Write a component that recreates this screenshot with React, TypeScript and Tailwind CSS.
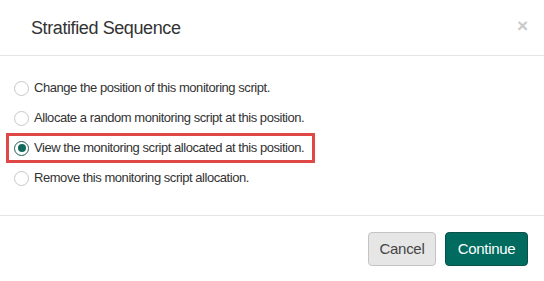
import { useState } from "react";

const OPTIONS = [
  "Change the position of this monitoring script.",
  "Allocate a random monitoring script at this position.",
  "View the monitoring script allocated at this position.",
  "Remove this monitoring script allocation.",
];

const Radio = ({ checked }: { checked: boolean }) => (
  <span
    className={`flex h-[15px] w-[15px] shrink-0 items-center justify-center rounded-full border ${
      checked ? "border-[#1f5c55] border-[1.5px]" : "border-[#c8c8c8]"
    } bg-white`}
  >
    {checked && <span className="h-[8px] w-[8px] rounded-full bg-[#12695e]" />}
  </span>
);

export default function App() {
  const [selected, setSelected] = useState(2);

  return (
    <div
      className="h-[281px] w-[544px] bg-white text-[#333]"
      style={{ fontFamily: '"Liberation Sans", Arial, sans-serif' }}
    >
      {/* header */}
      <div className="flex h-[56px] items-center justify-between border-b border-[#e5e5e5] pl-[31px] pr-[16px]">
        <h4 className="text-[18px] leading-none tracking-[-0.4px] text-[#333]">Stratified Sequence</h4>
        <button type="button" className="pb-[4px] text-[19px] font-bold leading-none text-[#cacaca]">
          ×
        </button>
      </div>

      {/* body */}
      <div className="flex flex-col items-start pb-[22px] pl-[6px] pt-[17px]">
        {OPTIONS.map((label, i) => (
          <label
            key={i}
            onClick={() => setSelected(i)}
            className={`flex h-[30px] cursor-pointer items-center gap-[5px] border-[3px] pl-[5px] pr-[8px] text-[13px] tracking-[-0.45px] ${
              i === selected ? "border-[#e04848]" : "border-transparent"
            }`}
          >
            <Radio checked={i === selected} />
            <span>{label}</span>
          </label>
        ))}
      </div>

      {/* footer */}
      <div className="flex justify-end gap-[9px] border-t border-[#e5e5e5] px-[16px] pt-[16px]">
        <button
          type="button"
          className="h-[34px] w-[68px] rounded-[4px] border border-[#c4c4c4] bg-[#e6e6e6] text-[15px] tracking-[-0.3px] text-[#444]"
        >
          Cancel
        </button>
        <button
          type="button"
          className="h-[34px] w-[83px] rounded-[4px] border border-[#0a5249] bg-[#006b5e] text-[15px] tracking-[-0.3px] text-white"
        >
          Continue
        </button>
      </div>
    </div>
  );
}
